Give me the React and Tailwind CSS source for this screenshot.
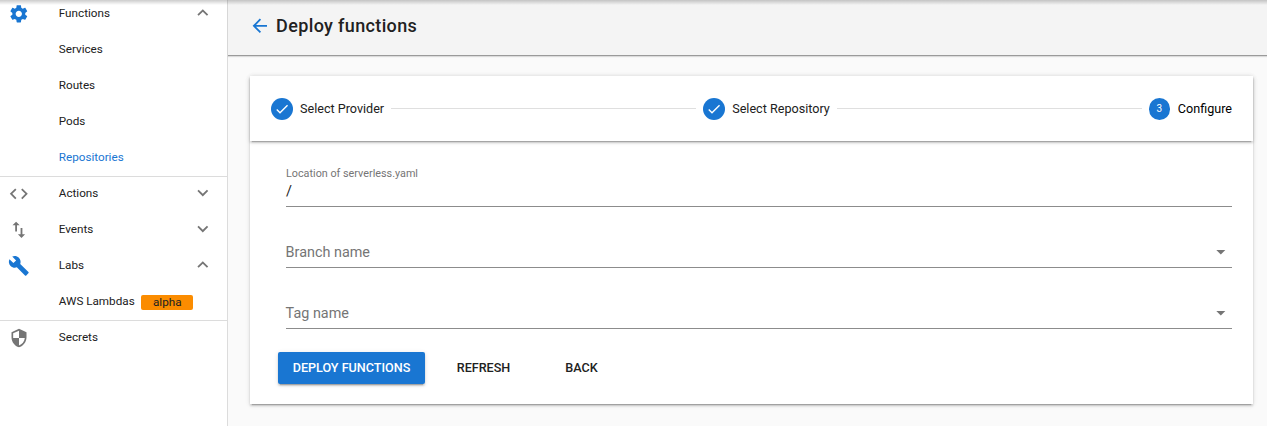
import React from "react";

const PATHS = {
  settings:
    "M19.14 12.94c.04-.3.06-.61.06-.94 0-.32-.02-.64-.07-.94l2.03-1.58c.18-.14.23-.41.12-.61l-1.92-3.32c-.12-.22-.37-.29-.59-.22l-2.39.96c-.5-.38-1.03-.7-1.62-.94l-.36-2.54c-.04-.24-.24-.41-.48-.41h-3.84c-.24 0-.43.17-.47.41l-.36 2.54c-.59.24-1.13.57-1.62.94l-2.39-.96c-.22-.08-.47 0-.59.22L2.74 8.87c-.12.21-.08.47.12.61l2.03 1.58c-.05.3-.09.63-.09.94s.02.64.07.94l-2.03 1.58c-.18.14-.23.41-.12.61l1.92 3.32c.12.22.37.29.59.22l2.39-.96c.5.38 1.03.7 1.62.94l.36 2.54c.05.24.24.41.48.41h3.84c.24 0 .44-.17.47-.41l.36-2.54c.59-.24 1.13-.56 1.62-.94l2.39.96c.22.08.47 0 .59-.22l1.92-3.32c.12-.22.07-.47-.12-.61l-2.01-1.58zM12 15.5c-1.93 0-3.5-1.57-3.5-3.5s1.57-3.5 3.5-3.5 3.5 1.57 3.5 3.5-1.57 3.5-3.5 3.5z",
  code: "M9.4 16.6L4.8 12l4.6-4.6L8 6l-6 6 6 6 1.4-1.4zm5.2 0l4.6-4.6-4.6-4.6L16 6l6 6-6 6-1.4-1.4z",
  swap: "M9 3L5 6.99h3V14h2V6.99h3L9 3zm7 14.01V10h-2v7.01h-3L15 21l4-3.99h-3z",
  build:
    "M22.7 19l-9.1-9.1c.9-2.3.4-5-1.5-6.9-2-2-5-2.4-7.4-1.3L9 6 6 9 1.6 4.7C.4 7.1.9 10.1 2.9 12.1c1.9 1.9 4.6 2.4 6.9 1.5l9.1 9.1c.4.4 1 .4 1.4 0l2.3-2.3c.5-.4.5-1.1.1-1.4z",
  shield:
    "M12 1L3 5v6c0 5.55 3.84 10.74 9 12 5.16-1.26 9-6.45 9-12V5l-9-4zm0 10.99h7c-.53 4.12-3.28 7.79-7 8.94V12H5V6.3l7-3.11v8.8z",
  up: "M12 8l-6 6 1.41 1.41L12 10.83l4.59 4.58L18 14z",
  down: "M16.59 8.59L12 13.17 7.41 8.59 6 10l6 6 6-6z",
  back: "M20 11H7.83l5.59-5.59L12 4l-8 8 8 8 1.41-1.41L7.83 13H20v-2z",
  check: "M9 16.17L4.83 12l-1.42 1.41L9 19 21 7l-1.41-1.41z",
  caret: "M7 10l5 5 5-5z",
};

function Icon({ name, className }) {
  return (
    <svg viewBox="0 0 24 24" fill="currentColor" className={`shrink-0 ${className}`}>
      <path d={PATHS[name]} />
    </svg>
  );
}

function NavItem({ icon, iconClass = "size-[21.6px] text-[#757575]", label, chevron, active, badge }) {
  return (
    <a className="flex h-9 items-center">
      <span className="flex w-[38.4px] shrink-0 justify-center pt-[2px]">
        {icon && <Icon name={icon} className={iconClass} />}
      </span>
      <span
        className={`ml-[20.4px] pt-[2px] text-[11.7px] leading-none ${active ? "text-[#1976d2]" : "text-[#212121]"}`}
      >
        {label}
      </span>
      {badge && (
        <span className="mt-[2px] ml-[6.6px] flex h-[15px] w-[52px] items-center justify-center rounded-[2px] bg-[#fb8c00] pt-px text-[11.7px] leading-none text-[#212121]">
          {badge}
        </span>
      )}
      {chevron && <Icon name={chevron} className="mr-[13.4px] ml-auto size-[21.6px] text-[#757575]" />}
    </a>
  );
}

const Divider = () => <div className="mt-px -mb-0.5 h-px bg-[#dcdcdc]" />;

function Step({ done, number, label, current }) {
  return (
    <div className="flex shrink-0 items-center">
      <span
        className={`flex h-[22px] items-center justify-center rounded-full bg-[#1976d2] text-[10px] leading-none text-white ${
          done ? "w-[22px]" : "mr-px w-[21px] pt-px"
        }`}
      >
        {done ? <Icon name="check" className="size-[16px]" /> : number}
      </span>
      <span className={`ml-[7px] pt-[2px] text-[12.6px] leading-none ${current ? "text-black" : "text-[#212121]"}`}>
        {label}
      </span>
    </div>
  );
}

const StepLine = () => <div className="mx-[7px] h-px flex-1 bg-[#dfdfdf]" />;

function SelectField({ label }) {
  return (
    <div className="flex h-[61px] items-end justify-between border-b border-[#8c8c8c] pb-[6px] text-[#757575]">
      <span className="-ml-[0.4px] text-[14.4px] leading-[17px]">{label}</span>
      <Icon name="caret" className="-mb-[2px] size-[21.6px]" />
    </div>
  );
}

export default function App() {
  return (
    <div className="relative flex h-[426px] w-full overflow-hidden bg-[#fafafa] font-[Roboto,sans-serif]">
      <nav className="w-[228px] shrink-0 border-r border-[#dcdcdc] bg-white">
        <div className="-mt-[5px]">
          <NavItem icon="settings" iconClass="size-[21.6px] text-[#1976d2]" label="Functions" chevron="up" />
          <NavItem label="Services" />
          <NavItem label="Routes" />
          <NavItem label="Pods" />
          <NavItem label="Repositories" active />
          <Divider />
          <NavItem icon="code" label="Actions" chevron="down" />
          <NavItem icon="swap" label="Events" chevron="down" />
          <NavItem icon="build" iconClass="size-[21.6px] text-[#1976d2]" label="Labs" chevron="up" />
          <NavItem label="AWS Lambdas" badge="alpha" />
          <Divider />
          <NavItem icon="shield" iconClass="-ml-px size-[20px] text-[#757575]" label="Secrets" />
        </div>
      </nav>

      <main className="flex min-w-0 flex-1 flex-col">
        <header className="flex h-[55px] shrink-0 items-center bg-[#f4f4f4] pb-[4px] pl-[21px] shadow-[0_1px_0_#9a9a9a,0_2px_1px_rgba(0,0,0,0.12)]">
          <Icon name="back" className="size-[21.6px] text-[#1976d2]" />
          <h1 className="ml-[5.5px] pt-px text-[18px] leading-none font-medium tracking-[0.36px] text-[#212121]">
            Deploy functions
          </h1>
        </header>

        <section className="mt-[21px] mr-[14px] ml-[22px] h-[328px] bg-white shadow-[0_3px_1px_-2px_rgba(0,0,0,0.2),0_2px_2px_0_rgba(0,0,0,0.14),0_1px_5px_0_rgba(0,0,0,0.12)]">
          <div className="flex h-[65px] items-center px-[21px] shadow-[0_3px_1px_-2px_rgba(0,0,0,0.2),0_2px_2px_0_rgba(0,0,0,0.14),0_1px_5px_0_rgba(0,0,0,0.12)]">
            <Step done label="Select Provider" />
            <StepLine />
            <Step done label="Select Repository" />
            <StepLine />
            <Step number="3" label="Configure" current />
          </div>

          <div className="pr-[21px] pl-9">
            <div className="flex h-[66px] flex-col justify-end border-b border-[#8c8c8c] pb-[5px]">
              <span className="text-[10.8px] leading-[13px] text-[#757575]">Location of serverless.yaml</span>
              <span className="mt-[3px] text-[14.4px] leading-[18px] text-[#212121]">/</span>
            </div>
            <SelectField label="Branch name" />
            <SelectField label="Tag name" />
          </div>

          <div className="mt-[23px] ml-7 flex h-8 items-center text-[12.6px] leading-none font-medium text-[#212121]">
            <button className="h-8 w-[147px] rounded-[2px] bg-[#1976d2] text-white shadow-[0_3px_1px_-2px_rgba(0,0,0,0.2),0_2px_2px_0_rgba(0,0,0,0.14),0_1px_5px_0_rgba(0,0,0,0.12)]">
              DEPLOY FUNCTIONS
            </button>
            <button className="ml-[14px] h-8 w-[89px]">REFRESH</button>
            <button className="ml-[14px] h-8 w-[79px]">BACK</button>
          </div>
        </section>
      </main>

      <div className="pointer-events-none absolute inset-x-0 top-0 h-[5px] bg-linear-to-b from-black/20 to-transparent" />
    </div>
  );
}
